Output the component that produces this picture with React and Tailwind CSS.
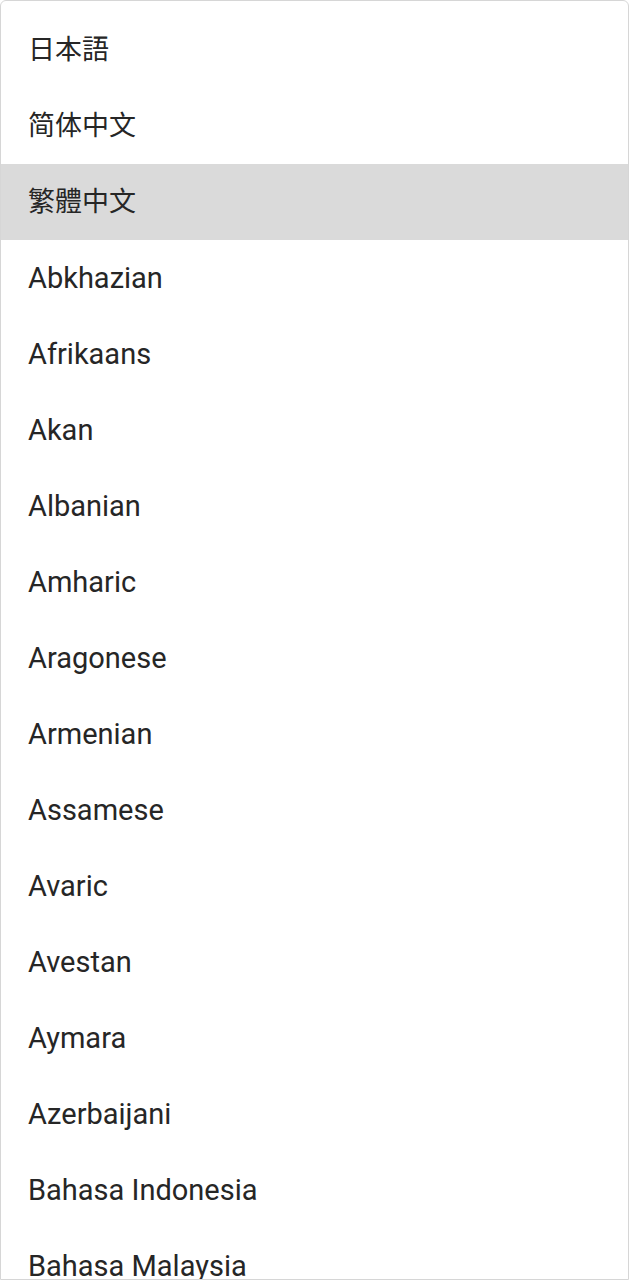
import React from "react";

const items = [
  { t: "日本語", f: "'Noto Sans CJK JP'" },
  { t: "简体中文", f: "'Noto Sans CJK SC'" },
  { t: "繁體中文", f: "'Noto Sans CJK TC'", sel: true },
  { t: "Abkhazian" },
  { t: "Afrikaans" },
  { t: "Akan" },
  { t: "Albanian" },
  { t: "Amharic" },
  { t: "Aragonese" },
  { t: "Armenian" },
  { t: "Assamese" },
  { t: "Avaric" },
  { t: "Avestan" },
  { t: "Aymara" },
  { t: "Azerbaijani" },
  { t: "Bahasa Indonesia" },
  { t: "Bahasa Malaysia" },
];

export default function App() {
  return (
    <div className="w-[629px] h-[1280px] overflow-hidden bg-white">
      <div className="h-[1280px] overflow-hidden border border-[#d6d6d6] rounded-t-[6px] bg-white pt-[11px] font-['Roboto','Noto_Sans_CJK_JP',sans-serif]">
        {items.map((it, i) => (
          <div
            key={i}
            className={`h-[76px] flex items-center pl-[27px] text-[29px] text-[#262626] ${it.sel ? "bg-[#dadada]" : ""}`}
          >
            <span
              className="leading-none"
              style={it.f ? { fontFamily: `Roboto, ${it.f}, sans-serif`, fontSize: "27px" } : undefined}
            >
              {it.t}
            </span>
          </div>
        ))}
      </div>
    </div>
  );
}
